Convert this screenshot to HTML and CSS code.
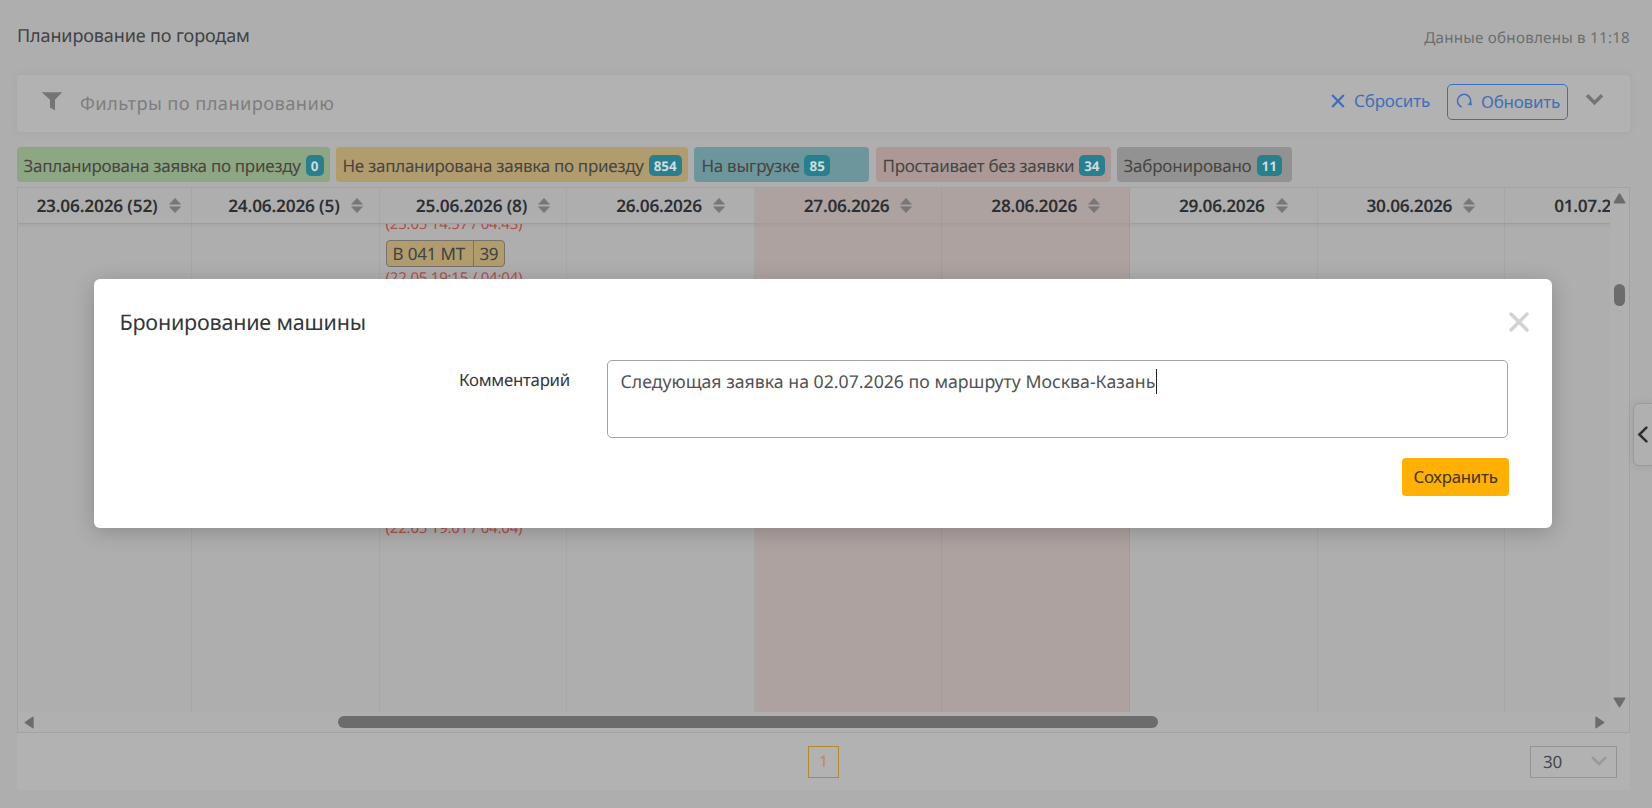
FILE: index.html
```html
<!DOCTYPE html>
<html lang="ru">
<head>
<meta charset="utf-8">
<title>Планирование по городам</title>
<link rel="stylesheet" href="styles.css">
</head>
<body>
<svg class="defs" width="0" height="0">
  <symbol id="sort" viewBox="0 0 12 15"><path d="M6 .3 11.5 6.2H.5ZM6 14.7 11.5 8.8H.5Z" fill="#777" stroke="#777" stroke-width=".6" stroke-linejoin="round"/></symbol>
</svg>
<div class="page">
  <header class="top">
    <h1 class="top-title">Планирование по городам</h1>
    <span class="top-updated">Данные обновлены в 11:18</span>
  </header>

  <section class="filters">
    <svg class="funnel" width="22" height="19" viewBox="0 0 22 19"><path d="M.8.3h20.4L14 7.8v10.7l-5-3V7.8Z" fill="#757575"/></svg>
    <span class="filters-title">Фильтры по планированию</span>
    <a class="reset"><svg width="14" height="14" viewBox="0 0 14 14"><path d="M1.2 1 12.8 13M12.8 1 1.2 13" stroke="#3a6fbf" stroke-width="2.2" fill="none"/></svg><span>Сбросить</span></a>
    <button class="refresh"><svg width="17" height="17" viewBox="0 0 17 17"><path d="M5.6 15A6.6 6.6 0 1 1 13.9 12" stroke="#3f71bb" stroke-width="1.5" fill="none"/><path d="M10.8 12.2 15.6 10.4 15.9 13.6Z" fill="#3f71bb"/></svg><span>Обновить</span></button>
    <svg class="expand" width="19" height="13" viewBox="0 0 19 13"><path d="M2 2.2 9.5 9.8 17 2.2" stroke="#757575" stroke-width="3.4" fill="none"/></svg>
  </section>

  <div class="legend">
    <span class="pill green">Запланирована заявка по приезду<b class="badge">0</b></span>
    <span class="pill amber">Не запланирована заявка по приезду<b class="badge">854</b></span>
    <span class="pill teal">На выгрузке<b class="badge">85</b></span>
    <span class="pill rose">Простаивает без заявки<b class="badge">34</b></span>
    <span class="pill gray">Забронировано<b class="badge">11</b></span>
  </div>

  <section class="table">
    <div class="grid">
      <div class="row head">
        <div class="th near">23.06.2026 (52)<svg><use href="#sort"/></svg></div>
        <div class="th mid">24.06.2026 (5)<svg><use href="#sort"/></svg></div>
        <div class="th mid">25.06.2026 (8)<svg><use href="#sort"/></svg></div>
        <div class="th">26.06.2026<svg><use href="#sort"/></svg></div>
        <div class="th weekend">27.06.2026<svg><use href="#sort"/></svg></div>
        <div class="th weekend">28.06.2026<svg><use href="#sort"/></svg></div>
        <div class="th">29.06.2026<svg><use href="#sort"/></svg></div>
        <div class="th">30.06.2026<svg><use href="#sort"/></svg></div>
        <div class="th">01.07.2026<svg><use href="#sort"/></svg></div>
      </div>
      <div class="row body">
        <div class="td"></div>
        <div class="td"></div>
        <div class="td trucks">
          <div class="late">(25.05 14:57 / 04:43)</div>
          <div class="truck"><span class="plate">В 041 МТ</span><span class="count">39</span></div>
          <div class="late">(22.05 19:15 / 04:04)</div>
          <div class="late far">(22.05 19:01 / 04:04)</div>
        </div>
        <div class="td"></div>
        <div class="td weekend"></div>
        <div class="td weekend"></div>
        <div class="td"></div>
        <div class="td"></div>
        <div class="td"></div>
      </div>
    </div>
    <div class="vbar">
      <svg width="13" height="11" viewBox="0 0 13 11"><path d="M6.5 1.2 11.6 9.6H1.4Z" fill="#6c6c6c" stroke="#6c6c6c" stroke-width="1.6" stroke-linejoin="round"/></svg>
      <i class="vthumb"></i>
      <svg class="vdown" width="13" height="11" viewBox="0 0 13 11"><path d="M6.5 9.6 11.6 1.4H1.4Z" fill="#6c6c6c" stroke="#6c6c6c" stroke-width="1.6" stroke-linejoin="round"/></svg>
    </div>
    <div class="hbar">
      <svg width="10" height="13" viewBox="0 0 10 13"><path d="M1.2 6.5 9 1.3v10.4Z" fill="#6c6c6c" stroke="#6c6c6c" stroke-width="1.4" stroke-linejoin="round"/></svg>
      <i class="hthumb"></i>
      <svg class="hright" width="10" height="13" viewBox="0 0 10 13"><path d="M8.8 6.5 1 1.3v10.4Z" fill="#6c6c6c" stroke="#6c6c6c" stroke-width="1.4" stroke-linejoin="round"/></svg>
    </div>
  </section>

  <footer class="pager">
    <span></span>
    <span class="page-no">1</span>
    <span class="size">30<svg width="16" height="11" viewBox="0 0 16 11"><path d="M1.8 1.8 8 8 14.2 1.8" stroke="#999" stroke-width="2.6" fill="none" stroke-linecap="round"/></svg></span>
  </footer>
</div>

<aside class="drawer"><svg width="11" height="17" viewBox="0 0 11 17"><path d="M9.4 1.6 2.4 8.5 9.4 15.4" stroke="#2c2f33" stroke-width="2.6" fill="none" stroke-linecap="round"/></svg></aside>

<div class="modal">
  <div class="modal-head">
    <h2 class="modal-title">Бронирование машины</h2>
    <svg width="20" height="20" viewBox="0 0 20 20"><path d="M2 2 18 18M18 2 2 18" stroke="#d3d3d3" stroke-width="3.4" stroke-linecap="round"/></svg>
  </div>
  <div class="field">
    <label class="label">Комментарий</label>
    <div class="comment"><span>Следующая заявка на 02.07.2026 по маршруту Москва-Казань</span><i class="caret"></i></div>
  </div>
  <button class="save">Сохранить</button>
</div>
</body>
</html>
```
FILE: styles.css
```css
* { box-sizing: border-box; }
body {
  margin: 0;
  width: 1652px;
  height: 808px;
  overflow: hidden;
  position: relative;
  background: #aeaeae;
  color: #404244;
  font-family: "Noto Sans", "Open Sans", sans-serif;
  text-rendering: geometricPrecision;
  white-space: nowrap;
}
svg { display: block; flex: none; }
.defs { position: absolute; }
button { font-family: inherit; background: none; border: 0; padding: 0; }
.page { display: flex; flex-direction: column; padding: 0 22px 0 17px; height: 808px; }

.top { display: flex; justify-content: space-between; height: 75px; padding-top: 22px; }
.top-title { margin: 0; font-size: 18px; font-weight: 400; line-height: 28px; letter-spacing: -.12px; }
.top-updated { font-size: 15.2px; line-height: 32px; letter-spacing: .22px; color: #6c6d6f; }

.filters {
  display: flex;
  align-items: center;
  height: 57px;
  padding: 0 26px 0 24px;
  background: #b2b2b2;
  border-radius: 4px;
  box-shadow: 0 0 10px rgba(0,0,0,.05);
}
.funnel { margin-top: -4px; }
.filters-title { flex: 1; margin: 0 0 0 17px; font-size: 18.3px; letter-spacing: .4px; line-height: 28px; color: #7e7e7e; }
.reset { display: flex; align-items: center; gap: 9px; margin-top: -6px; color: #416fb6; font-size: 17px; letter-spacing: -.2px; line-height: 28px; }
.refresh {
  display: flex;
  align-items: center;
  gap: 8px;
  width: 121px;
  height: 36px;
  margin: -4px 17px 0;
  padding: 0 0 0 8px;
  border: 1.5px solid #3a6fbf;
  border-radius: 5px;
  color: #416fb6;
  font-size: 17px;
  letter-spacing: -.25px;
}
.refresh svg { margin-top: -2px; }
.expand { margin-top: -8px; }

.legend { display: flex; gap: 6px; margin-top: 15px; height: 35px; }
.pill { display: flex; align-items: center; padding: 1px 0 0 6.5px; border-radius: 4px; font-size: 17px; letter-spacing: -.29px; color: #46453f; }
.badge {
  height: 20.5px;
  min-width: 18px;
  margin: 1px 0 0 5px;
  padding: 1px 5px 0;
  border-radius: 5px;
  background: #287f8d;
  color: #d0dcde;
  font-size: 13.4px;
  line-height: 20px;
  letter-spacing: 0;
  text-align: center;
}
.green { width: 313px; background: #8da683; }
.amber { width: 352px; background: #b09c6d; }
.teal { width: 175px; padding-left: 7.5px; letter-spacing: -.3px; background: #6c969c; }
.rose { width: 235px; margin-left: 1px; letter-spacing: -.32px; background: #ac9997; }
.gray { width: 175px; letter-spacing: -.22px; background: #929292; }

.table {
  display: grid;
  grid-template-columns: 1592px 1fr;
  grid-template-rows: 524px 1fr;
  height: 546px;
  margin-top: 5px;
  border: 1px solid #a2a2a2;
  background: #b0b0b0;
}
.grid { overflow: hidden; background: #aeaeae; }
.row { display: grid; grid-template-columns: 174px repeat(8, 187.6px); width: 1674.8px; }
.head { height: 36px; border-bottom: 1px solid #9e9e9e; box-shadow: 0 2px 2px rgba(0,0,0,.04); position: relative; background: #aeaeae; }
.th {
  display: flex;
  align-items: center;
  justify-content: flex-end;
  gap: 11px;
  padding: 1px 29px 0 0;
  border-right: 1px solid #a7a7a7;
  font-size: 17.3px;
  font-weight: 600;
  letter-spacing: -.3px;
  color: #2c2f33;
}
.th svg { width: 12px; height: 15px; margin-top: -1px; }
.near { padding-right: 10.5px; letter-spacing: -.2px; }
.mid { padding-right: 16px; letter-spacing: -.2px; }
.body { height: 488px; }
.td { border-right: 1px solid #a7a7a7; }
.weekend { background: #ada2a0; border-color: #a69b99; }
.trucks { padding-left: 6px; }
.late { margin-top: 1px; color: #b04f4b; font-size: 15px; line-height: 20px; letter-spacing: -.22px; }
.late:first-child { margin-top: -10px; }
.late.far { margin-top: 229.5px; }
.truck { display: flex; width: 119px; height: 27px; margin-top: 6px; border: 1px solid #77736a; border-radius: 4px; background: #b09c6d; font-size: 17px; line-height: 26px; }
.plate { width: 87px; padding-left: 6px; letter-spacing: -.2px; border-right: 1px solid #77736a; }
.count { padding-left: 6px; letter-spacing: -.5px; }

.vbar { display: flex; flex-direction: column; padding: 5px 0 4px 3px; }
.vthumb { width: 11px; height: 22px; margin: 80px 0 0 1px; border-radius: 6px; background: #6c6c6c; }
.vdown { margin-top: auto; }
.hbar { display: flex; align-items: center; padding: 0 5px 0 6px; }
.hthumb { width: 820px; height: 12px; margin: -1px 0 0 304px; border-radius: 6px; background: #6c6c6c; }
.hright { margin-left: auto; }

.pager { display: grid; grid-template-columns: 791px 31px 1fr; height: 57px; padding: 12.5px 13px 0 0; background: #b2b2b2; }
.page-no { height: 32px; border: 1.5px solid #b38a2e; color: #bb8c55; font-size: 16px; line-height: 29px; text-align: center; }
.size { display: flex; justify-content: space-between; align-items: center; justify-self: end; width: 87px; height: 32px; padding: 0 9px 0 12px; border: 1px solid #949494; font-size: 17px; letter-spacing: -.2px; color: #45494f; }

.drawer { position: absolute; left: 1633px; top: 402.5px; width: 24px; height: 63px; padding: 22px 0 0 3px; border: 1.5px solid #979a9e; border-radius: 6px; background: #b0b0b0; box-shadow: 0 0 8px rgba(0,0,0,.08); }

.modal {
  position: absolute;
  left: 94px;
  top: 279px;
  width: 1458px;
  height: 248.5px;
  padding: 29px 23px 0 25.5px;
  border-radius: 6px;
  background: #fff;
  box-shadow: 0 4px 22px rgba(0,0,0,.2);
  color: #33373b;
}
.modal-head { display: flex; justify-content: space-between; height: 52px; }
.modal-title { margin: 0; font-size: 21.5px; font-weight: 400; line-height: 30px; letter-spacing: -.2px; }
.modal-head svg { margin-top: 4px; }
.field { display: grid; grid-template-columns: 450.5px 901px; column-gap: 37px; height: 78px; }
.label { text-align: right; font-size: 16.8px; letter-spacing: -.24px; line-height: 40px; }
.comment { display: flex; padding: 9px 0 0 12.5px; border: 1px solid #a3a3a3; border-radius: 5px; font-size: 17.7px; line-height: 25px; color: #505254; }
.caret { width: 1px; height: 25px; margin: -1px 0 0 1px; background: #222; }
.save { display: block; width: 107px; height: 38px; margin: 19.5px 20px 0 auto; border-radius: 4px; background: #ffb000; color: #40351c; font-size: 16.8px; letter-spacing: -.22px; }
```
